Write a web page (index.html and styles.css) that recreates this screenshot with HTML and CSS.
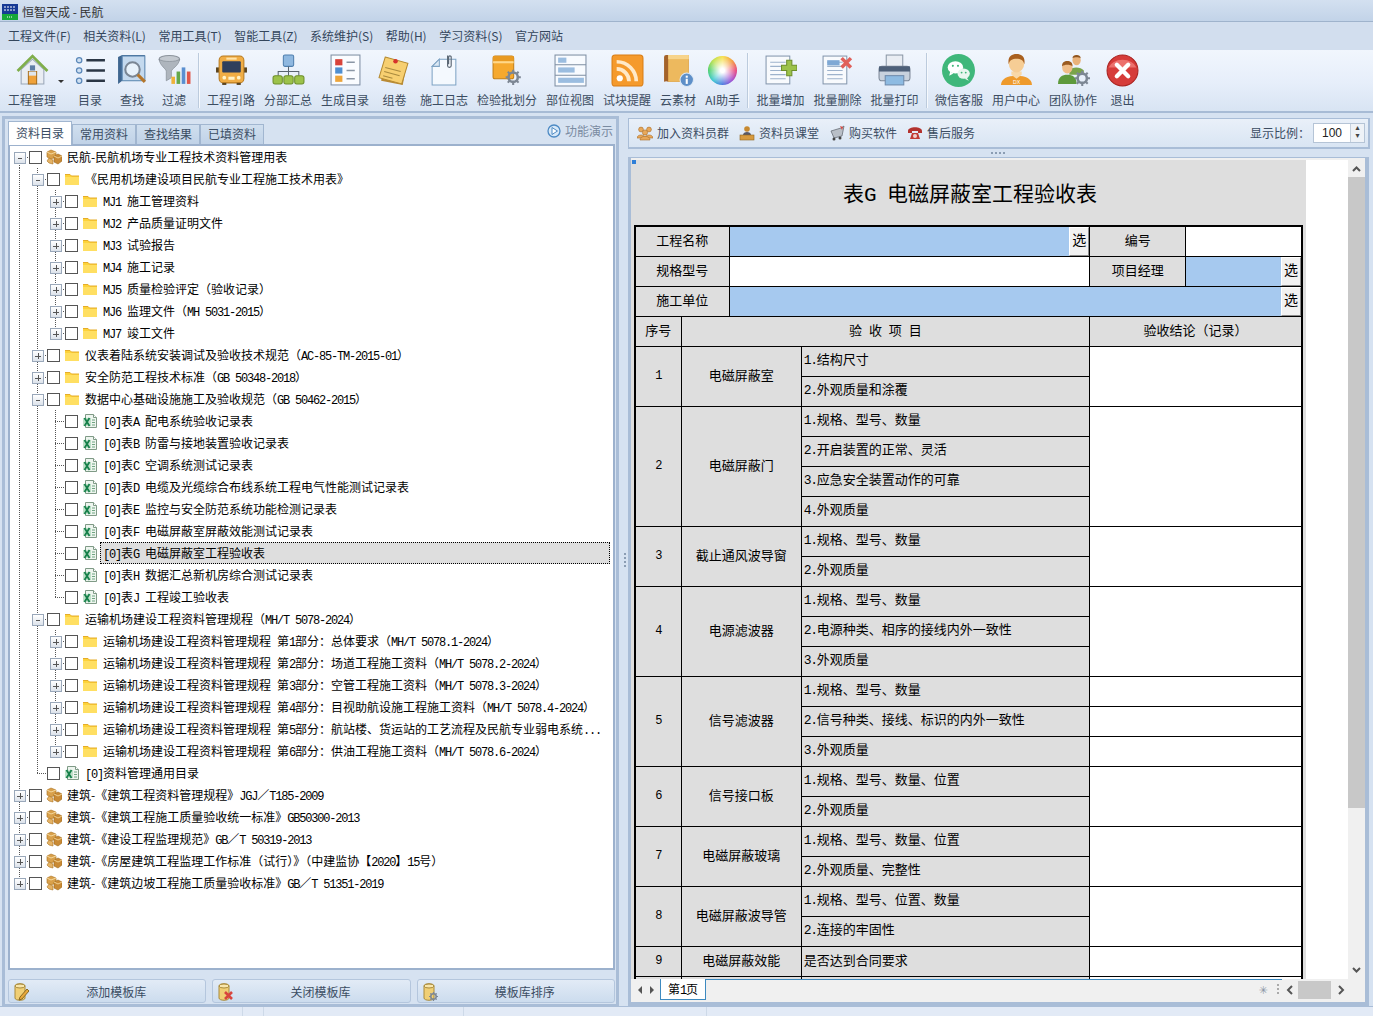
FILE: index.html
```html
<!DOCTYPE html>
<html lang="zh">
<head>
<meta charset="utf-8">
<title>恒智天成 - 民航</title>
<link rel="stylesheet" href="styles.css">
</head>
<body>
<svg class="defs" aria-hidden="true">
  <symbol id="pkg" viewBox="0 0 16 16"><path d="M5 1l5 2v5L5 10 1 8V3z" fill="#d9a04a" stroke="#a9701f" stroke-width=".6"/><path d="M1 3l4 2 5-2" fill="none" stroke="#f3d9a0"/><path d="M8 7l4-2 4 2v5l-4 3-4-2z" fill="#c98a35" stroke="#9c6a1e" stroke-width=".6"/><path d="M3 9l4 2v4l-4-1-2-2z" fill="#e5b365" stroke="#a9701f" stroke-width=".6"/><path d="M8 7l4 2 4-2" fill="none" stroke="#f0cf8e"/></symbol>
  <symbol id="fld" viewBox="0 0 16 16"><path d="M1 3.500h5l1.500 1.500H15V14H1z" fill="#fdd33a"/><path d="M1 6h14v8H1z" fill="#ffdf62"/><path d="M1 3.500h5l1.500 1.500H15" fill="none" stroke="#e5ac2a"/></symbol>
  <symbol id="xls" viewBox="0 0 16 16"><path d="M3.500 1.500h8l3 3v10h-11z" fill="#eef5ef" stroke="#7f9a86"/><path d="M11.500 1.500v3h3" fill="#fff" stroke="#7f9a86"/><path d="M1 5h8v8H1z" fill="#bfe0c9"/><path d="M2.500 5l5 8M7.500 5l-5 8" stroke="#16804a" stroke-width="1.800"/><path d="M10 7h3M10 9.500h3M10 12h3" stroke="#6fa582"/></symbol>
  <symbol id="home" viewBox="0 0 32 32"><path d="M5 15v14h22V15L16 5z" fill="#e9edf3" stroke="#9aa7b8"/><path d="M1.500 16.500L16 2l14.500 14.500" fill="none" stroke="#7fae4a" stroke-width="2.600"/><path d="M12 17h8v12h-8z" fill="#f0a23a" stroke="#a86d18"/><path d="M12.500 17h7v4h-7z" fill="#dfe6ee"/><rect x="13.500" y="11" width="5" height="5" fill="#5e7da6"/></symbol>
  <symbol id="list" viewBox="0 0 32 32"><g fill="#cfe0f2" stroke="#5a87b8" stroke-width="1.200"><circle cx="5" cy="6" r="2.600"/><circle cx="5" cy="16" r="2.600"/><circle cx="5" cy="26" r="2.600"/></g><path d="M12 6h18M12 16h18M12 26h18" stroke="#2b3645" stroke-width="2.400"/></symbol>
  <symbol id="find" viewBox="0 0 32 32"><path d="M2 3l4-2h22v25H6l-4 3z" fill="#3f6690"/><path d="M6 2h22v24H6z" fill="#c4d9ee" stroke="#5f8ab3"/><circle cx="16" cy="15" r="7" fill="#e8f2fb" stroke="#7a8694" stroke-width="2"/><path d="M21 20l7 7" stroke="#b5762a" stroke-width="3"/></symbol>
  <symbol id="filter" viewBox="0 0 32 32"><ellipse cx="11" cy="5" rx="10" ry="3.500" fill="#c3c9d0" stroke="#8b939c"/><path d="M1 5c1 7 7 9 7 12v9l5-3v-6c0-3 7-5 8-12-3 3-17 3-20 0z" fill="#aeb5bd" stroke="#7e868f" stroke-width=".6"/><rect x="13" y="22" width="3.500" height="7" fill="#efb23a"/><rect x="18" y="17" width="3.500" height="12" fill="#64a84a"/><rect x="23" y="13" width="3.500" height="16" fill="#5a8fd0"/><rect x="28" y="17" width="3.500" height="12" fill="#e0574a"/></symbol>
  <symbol id="bus" viewBox="0 0 32 32"><rect x="1" y="13" width="3" height="5" fill="#5a4420"/><rect x="28" y="13" width="3" height="5" fill="#5a4420"/><rect x="4" y="2" width="24" height="26" rx="4" fill="#f0ad45" stroke="#b87a1e"/><rect x="7" y="7" width="18" height="11" rx="1" fill="#2f3f5c"/><rect x="11" y="3.500" width="10" height="2" fill="#ffe3a8"/><circle cx="9" cy="23" r="1.800" fill="#fff3c8"/><circle cx="23" cy="23" r="1.800" fill="#fff3c8"/><rect x="13" y="22" width="6" height="3" fill="#fff3c8"/><rect x="7" y="28" width="4" height="2" fill="#5a4420"/><rect x="21" y="28" width="4" height="2" fill="#5a4420"/></symbol>
  <symbol id="org" viewBox="0 0 32 32"><rect x="11" y="1" width="10" height="11" rx="1.500" fill="#8fb8e0" stroke="#4f7fae"/><path d="M16 12v5M6 21v-4h20v4M16 17v4" stroke="#5a6470" fill="none"/><g fill="#9cc24a" stroke="#6d8f2a"><rect x="1" y="21" width="9" height="8" rx="2"/><rect x="11.500" y="21" width="9" height="8" rx="2"/><rect x="22" y="21" width="9" height="8" rx="2"/></g></symbol>
  <symbol id="cat" viewBox="0 0 32 32"><rect x="2" y="1" width="28" height="29" fill="#fafcff" stroke="#7d8ea3"/><rect x="6" y="5" width="7" height="6" fill="#d8433a"/><rect x="6" y="13" width="7" height="6" fill="#4f8fd0"/><rect x="6" y="21" width="7" height="6" fill="#eda53a"/><path d="M17 8h8M17 16h8M17 24h8" stroke="#8a96a5" stroke-width="1.400"/></symbol>
  <symbol id="vol" viewBox="0 0 32 32"><path d="M7 5l21 4-4 21L3 26z" fill="#b98a36"/><path d="M7 3l22 6-6 20L1 23z" fill="#f7cf70" stroke="#b58a30"/><path d="M7 13l15 4M6 17l15 4M5 21l9 2.500" stroke="#a98a3e"/><circle cx="17" cy="7" r="2.200" fill="#d7322c"/></symbol>
  <symbol id="log" viewBox="0 0 32 32"><path d="M4 30V12L11 5h16v25z" fill="#f4f9fe" stroke="#7fa3c4"/><path d="M4 12l7-7v7z" fill="#dbe8f4" stroke="#7fa3c4"/><path d="M19 1.500v10c0 2 3.500 2 3.500 0V3c0-1.500-2.500-1.500-2.500 0v7" fill="none" stroke="#5a6673" stroke-width="1.100"/></symbol>
  <symbol id="gear" viewBox="0 0 12 12"><circle cx="6" cy="6" r="3.600" fill="none" stroke="#7d8794" stroke-width="2"/><path d="M6 0v2.500M6 9.500V12M0 6h2.500M9.500 6H12M1.800 1.800l1.700 1.700M8.500 8.500l1.700 1.700M10.200 1.800L8.500 3.500M3.500 8.500l-1.700 1.700" stroke="#7d8794" stroke-width="1.600"/></symbol>
  <symbol id="batch" viewBox="0 0 32 32"><rect x="2" y="2" width="20" height="22" rx="2" fill="#f6a92e" stroke="#c47f14"/><rect x="2" y="2" width="20" height="5" fill="#e89a22"/><rect x="2" y="7" width="20" height="2" fill="#ffd88a"/><use href="#gear" x="14" y="15" width="15" height="15"/></symbol>
  <symbol id="part" viewBox="0 0 32 32"><rect x="1" y="1" width="30" height="30" fill="#f8fbff" stroke="#7d8ea3"/><path d="M1 10.500h30M1 20.500h30" stroke="#7d8ea3"/><rect x="4" y="3.500" width="8" height="5" fill="#9bbde0"/><rect x="4" y="13" width="16" height="5" fill="#9bbde0"/><rect x="4" y="23" width="25" height="5" fill="#9bbde0"/></symbol>
  <symbol id="rss" viewBox="0 0 32 32"><rect x="1" y="1" width="30" height="30" rx="3" fill="#f59a2c" stroke="#d97c12"/><circle cx="8.500" cy="23.500" r="3" fill="#fff"/><path d="M5.500 14.500a12 12 0 0 1 12 12M5.500 7.500a19 19 0 0 1 19 19" fill="none" stroke="#ffe9c8" stroke-width="3.600"/></symbol>
  <symbol id="book" viewBox="0 0 32 32"><path d="M2 3a2 2 0 0 1 2-2h22v26H6a4 4 0 0 0-4 0z" fill="#a3622a"/><rect x="6" y="1" width="20" height="26" fill="#edb95e"/><path d="M6 1h20v4H6z" fill="#f7d48c"/><circle cx="24" cy="25" r="6.500" fill="#5e8fc8" stroke="#dce9f6"/><rect x="23" y="24" width="2" height="5" fill="#fff"/><rect x="23" y="21" width="2" height="2" fill="#fff"/></symbol>
  <symbol id="doc" viewBox="0 0 32 32"><rect x="2" y="2" width="23" height="27" fill="#f8fafd" stroke="#8496ad"/><path d="M6 8h15M6 12h15M6 16h15M6 20h15M6 24h15" stroke="#9db2cc"/></symbol>
  <symbol id="print" viewBox="0 0 32 32"><rect x="8" y="1" width="16" height="13" fill="#e9edf3" stroke="#8b97a6"/><rect x="1" y="12" width="30" height="14" rx="3" fill="#c8d2de" stroke="#7b8796"/><rect x="1" y="12" width="30" height="5" fill="#4d5f78"/><rect x="7" y="21" width="18" height="9" fill="#8ebbe2" stroke="#6f8bab"/></symbol>
  <symbol id="wx" viewBox="0 0 32 32"><circle cx="16" cy="16" r="16" fill="#3fb77a"/><ellipse cx="13" cy="13" rx="7.500" ry="6" fill="#fff"/><path d="M8 17l-1 4 4-2z" fill="#fff"/><ellipse cx="21" cy="19" rx="6" ry="5" fill="#e8f6ef"/><path d="M24 23l2 3-4-2z" fill="#e8f6ef"/><circle cx="10.500" cy="11.500" r="1" fill="#3fb77a"/><circle cx="15.500" cy="11.500" r="1" fill="#3fb77a"/><circle cx="19" cy="18" r=".9" fill="#3fb77a"/><circle cx="23" cy="18" r=".9" fill="#3fb77a"/></symbol>
  <symbol id="user" viewBox="0 0 32 32"><path d="M1 30c0-6 6-9 15-9s15 3 15 9z" fill="#ee9a2c"/><path d="M11 20l5 4 5-4v-3H11z" fill="#f8d8a8"/><ellipse cx="16" cy="9" rx="7.500" ry="9" fill="#f6cd95"/><path d="M8.500 10C7 3 11 0 16 0s9 3 7.500 10C23 6 20 4.500 16 4.500S9 6 8.500 10z" fill="#a9601f"/></symbol>
  <symbol id="team" viewBox="0 0 32 32"><ellipse cx="19" cy="6" rx="4" ry="5" fill="#eab27a"/><path d="M15 4c0-4 8-4 8 0-2-1-6-1-8 0z" fill="#8f5520"/><path d="M12 16c2-4 11-4 14 0v4H12z" fill="#7aa44a"/><ellipse cx="10" cy="13" rx="5" ry="6" fill="#f0bd88"/><path d="M5 12c-1-7 11-7 10 0-2-2-8-2-10 0z" fill="#9a5a20"/><path d="M1 29c0-7 4-9 9-9s9 2 9 9z" fill="#5e9a3c"/><use href="#gear" x="17" y="16" width="15" height="15"/></symbol>
  <symbol id="quit" viewBox="0 0 32 32"><circle cx="16" cy="16" r="15" fill="#d63c3a" stroke="#a92522"/><path d="M2.500 13a14 10 0 0 1 27 0z" fill="#ec716d"/><path d="M10.500 10.500l11 11M21.500 10.500l-11 11" stroke="#fff" stroke-width="4.200" stroke-linecap="round"/></symbol>
</svg>

<header class="titlebar">
  <svg class="applogo" viewBox="0 0 16 16"><rect width="16" height="10" fill="#173a95"/><rect y="10" width="16" height="6" fill="#17a83a"/><path d="M2 3h12M2 6h12" stroke="#fff" stroke-dasharray="2 1"/><path d="M5 13h6" stroke="#fff" stroke-dasharray="1 1"/></svg>
  <span>恒智天成 - 民航</span>
</header>

<nav class="menubar">
  <span>工程文件(F)</span><span>相关资料(L)</span><span>常用工具(T)</span><span>智能工具(Z)</span><span>系统维护(S)</span><span>帮助(H)</span><span>学习资料(S)</span><span>官方网站</span>
</nav>

<div class="toolbar">
  <div class="tb first"><svg><use href="#home"/></svg><span>工程管理</span><i class="drop"></i></div>
  <div class="tb"><svg><use href="#list"/></svg><span>目录</span></div>
  <div class="tb"><svg><use href="#find"/></svg><span>查找</span></div>
  <div class="tb"><svg><use href="#filter"/></svg><span>过滤</span></div>
  <div class="sep"></div>
  <div class="tb"><svg><use href="#bus"/></svg><span>工程引路</span></div>
  <div class="tb"><svg><use href="#org"/></svg><span>分部汇总</span></div>
  <div class="tb"><svg><use href="#cat"/></svg><span>生成目录</span></div>
  <div class="tb"><svg><use href="#vol"/></svg><span>组卷</span></div>
  <div class="tb"><svg><use href="#log"/></svg><span>施工日志</span></div>
  <div class="tb"><svg><use href="#batch"/></svg><span>检验批划分</span></div>
  <div class="tb"><svg><use href="#part"/></svg><span>部位视图</span></div>
  <div class="tb"><svg><use href="#rss"/></svg><span>试块提醒</span></div>
  <div class="tb"><svg><use href="#book"/></svg><span>云素材</span></div>
  <div class="tb"><svg class="wheel"></svg><span>AI助手</span></div>
  <div class="sep"></div>
  <div class="tb"><svg viewBox="0 0 32 32"><use href="#doc"/><path d="M22 6h5v5h5v5h-5v5h-5v-5h-5v-5h5z" fill="#9cc24a" stroke="#6d8f2a"/></svg><span>批量增加</span></div>
  <div class="tb"><svg viewBox="0 0 32 32"><use href="#doc"/><rect x="6" y="6" width="12" height="5" fill="#7fa8d4"/><path d="M20 4l9 9M29 4l-9 9" stroke="#e0605a" stroke-width="3.400"/></svg><span>批量删除</span></div>
  <div class="tb"><svg><use href="#print"/></svg><span>批量打印</span></div>
  <div class="sep"></div>
  <div class="tb"><svg><use href="#wx"/></svg><span>微信客服</span></div>
  <div class="tb"><svg viewBox="0 0 32 32"><use href="#user"/><text class="dx" x="16" y="29.500">DX</text></svg><span>用户中心</span></div>
  <div class="tb"><svg><use href="#team"/></svg><span>团队协作</span></div>
  <div class="tb"><svg><use href="#quit"/></svg><span>退出</span></div>
</div>

<main class="main">
  <section class="left">
    <div class="tabs">
      <span class="tab on">资料目录</span><span class="tab">常用资料</span><span class="tab">查找结果</span><span class="tab">已填资料</span>
      <span class="demo"><svg viewBox="0 0 14 14"><circle cx="7" cy="7" r="6" fill="#d7e8f8" stroke="#4d8ac4" stroke-width="1.300"/><path d="M5 3.500v7L10.500 7z" fill="#fff" stroke="#4d8ac4"/></svg>功能演示</span>
    </div>
    <div class="tree">
      <div class="r"><i class="xf mi"></i><b></b><svg><use href="#pkg"/></svg><span>民航-民航机场专业工程技术资料管理用表</span></div>
      <div class="r"><i class="v"></i><i class="x mi"></i><b></b><svg><use href="#fld"/></svg><span>《民用机场建设项目民航专业工程施工技术用表》</span></div>
      <div class="r"><i class="v"></i><i class="v"></i><i class="x pl"></i><b></b><svg><use href="#fld"/></svg><span><u>MJ1 </u>施工管理资料</span></div>
      <div class="r"><i class="v"></i><i class="v"></i><i class="x pl"></i><b></b><svg><use href="#fld"/></svg><span><u>MJ2 </u>产品质量证明文件</span></div>
      <div class="r"><i class="v"></i><i class="v"></i><i class="x pl"></i><b></b><svg><use href="#fld"/></svg><span><u>MJ3 </u>试验报告</span></div>
      <div class="r"><i class="v"></i><i class="v"></i><i class="x pl"></i><b></b><svg><use href="#fld"/></svg><span><u>MJ4 </u>施工记录</span></div>
      <div class="r"><i class="v"></i><i class="v"></i><i class="x pl"></i><b></b><svg><use href="#fld"/></svg><span><u>MJ5 </u>质量检验评定（验收记录）</span></div>
      <div class="r"><i class="v"></i><i class="v"></i><i class="x pl"></i><b></b><svg><use href="#fld"/></svg><span><u>MJ6 </u>监理文件（<u>MH 5031-2015</u>）</span></div>
      <div class="r"><i class="v"></i><i class="v"></i><i class="xl pl"></i><b></b><svg><use href="#fld"/></svg><span><u>MJ7 </u>竣工文件</span></div>
      <div class="r"><i class="v"></i><i class="x pl"></i><b></b><svg><use href="#fld"/></svg><span>仪表着陆系统安装调试及验收技术规范（<u>AC-85-TM-2015-01</u>）</span></div>
      <div class="r"><i class="v"></i><i class="x pl"></i><b></b><svg><use href="#fld"/></svg><span>安全防范工程技术标准（<u>GB 50348-2018</u>）</span></div>
      <div class="r"><i class="v"></i><i class="x mi"></i><b></b><svg><use href="#fld"/></svg><span>数据中心基础设施施工及验收规范（<u>GB 50462-2015</u>）</span></div>
      <div class="r"><i class="v"></i><i class="v"></i><i class="x"></i><b></b><svg><use href="#xls"/></svg><span><u>[0]</u>表<u>A </u>配电系统验收记录表</span></div>
      <div class="r"><i class="v"></i><i class="v"></i><i class="x"></i><b></b><svg><use href="#xls"/></svg><span><u>[0]</u>表<u>B </u>防雷与接地装置验收记录表</span></div>
      <div class="r"><i class="v"></i><i class="v"></i><i class="x"></i><b></b><svg><use href="#xls"/></svg><span><u>[0]</u>表<u>C </u>空调系统测试记录表</span></div>
      <div class="r"><i class="v"></i><i class="v"></i><i class="x"></i><b></b><svg><use href="#xls"/></svg><span><u>[0]</u>表<u>D </u>电缆及光缆综合布线系统工程电气性能测试记录表</span></div>
      <div class="r"><i class="v"></i><i class="v"></i><i class="x"></i><b></b><svg><use href="#xls"/></svg><span><u>[0]</u>表<u>E </u>监控与安全防范系统功能检测记录表</span></div>
      <div class="r"><i class="v"></i><i class="v"></i><i class="x"></i><b></b><svg><use href="#xls"/></svg><span><u>[0]</u>表<u>F </u>电磁屏蔽室屏蔽效能测试记录表</span></div>
      <div class="r sel"><i class="v"></i><i class="v"></i><i class="x"></i><b></b><svg><use href="#xls"/></svg><span><u>[0]</u>表<u>G </u>电磁屏蔽室工程验收表</span></div>
      <div class="r"><i class="v"></i><i class="v"></i><i class="x"></i><b></b><svg><use href="#xls"/></svg><span><u>[0]</u>表<u>H </u>数据汇总新机房综合测试记录表</span></div>
      <div class="r"><i class="v"></i><i class="v"></i><i class="xl"></i><b></b><svg><use href="#xls"/></svg><span><u>[0]</u>表<u>J </u>工程竣工验收表</span></div>
      <div class="r"><i class="v"></i><i class="x mi"></i><b></b><svg><use href="#fld"/></svg><span>运输机场建设工程资料管理规程（<u>MH/T 5078-2024</u>）</span></div>
      <div class="r"><i class="v"></i><i class="v"></i><i class="x pl"></i><b></b><svg><use href="#fld"/></svg><span>运输机场建设工程资料管理规程<u> </u>第<u>1</u>部分：总体要求（<u>MH/T 5078.1-2024</u>）</span></div>
      <div class="r"><i class="v"></i><i class="v"></i><i class="x pl"></i><b></b><svg><use href="#fld"/></svg><span>运输机场建设工程资料管理规程<u> </u>第<u>2</u>部分：场道工程施工资料（<u>MH/T 5078.2-2024</u>）</span></div>
      <div class="r"><i class="v"></i><i class="v"></i><i class="x pl"></i><b></b><svg><use href="#fld"/></svg><span>运输机场建设工程资料管理规程<u> </u>第<u>3</u>部分：空管工程施工资料（<u>MH/T 5078.3-2024</u>）</span></div>
      <div class="r"><i class="v"></i><i class="v"></i><i class="x pl"></i><b></b><svg><use href="#fld"/></svg><span>运输机场建设工程资料管理规程<u> </u>第<u>4</u>部分：目视助航设施工程施工资料（<u>MH/T 5078.4-2024</u>）</span></div>
      <div class="r"><i class="v"></i><i class="v"></i><i class="x pl"></i><b></b><svg><use href="#fld"/></svg><span>运输机场建设工程资料管理规程<u> </u>第<u>5</u>部分：航站楼、货运站的工艺流程及民航专业弱电系统<u>...</u></span></div>
      <div class="r"><i class="v"></i><i class="v"></i><i class="xl pl"></i><b></b><svg><use href="#fld"/></svg><span>运输机场建设工程资料管理规程<u> </u>第<u>6</u>部分：供油工程施工资料（<u>MH/T 5078.6-2024</u>）</span></div>
      <div class="r"><i class="v"></i><i class="xl"></i><b></b><svg><use href="#xls"/></svg><span><u>[0]</u>资料管理通用目录</span></div>
      <div class="r"><i class="x pl"></i><b></b><svg><use href="#pkg"/></svg><span>建筑-《建筑工程资料管理规程》<u>JGJ</u>／<u>T185-2009</u></span></div>
      <div class="r"><i class="x pl"></i><b></b><svg><use href="#pkg"/></svg><span>建筑-《建筑工程施工质量验收统一标准》<u>GB50300-2013</u></span></div>
      <div class="r"><i class="x pl"></i><b></b><svg><use href="#pkg"/></svg><span>建筑-《建设工程监理规范》<u>GB</u>／<u>T 50319-2013</u></span></div>
      <div class="r"><i class="x pl"></i><b></b><svg><use href="#pkg"/></svg><span>建筑-《房屋建筑工程监理工作标准（试行）》（中建监协【<u>2020</u>】<u>15</u>号）</span></div>
      <div class="r"><i class="xl pl"></i><b></b><svg><use href="#pkg"/></svg><span>建筑-《建筑边坡工程施工质量验收标准》<u>GB</u>／<u>T 51351-2019</u></span></div>
    </div>
    <div class="tplbar">
      <button class="tpl"><svg viewBox="0 0 16 18"><path d="M2 3c0-3 10-3 10 0v12c0 3-10 3-10 0z" fill="#f0cf75" stroke="#a98a3a"/><ellipse cx="7" cy="3" rx="5" ry="2" fill="#f8e6ac" stroke="#a98a3a"/><path d="M14 6l2 2-7 8-3 1 1-3z" fill="#e8a83a" stroke="#8a6a22"/></svg><span>添加模板库</span></button>
      <button class="tpl"><svg viewBox="0 0 16 18"><path d="M2 3c0-3 10-3 10 0v12c0 3-10 3-10 0z" fill="#f0cf75" stroke="#a98a3a"/><ellipse cx="7" cy="3" rx="5" ry="2" fill="#f8e6ac" stroke="#a98a3a"/><path d="M8 9l7 7M15 9l-7 7" stroke="#d8453e" stroke-width="2.600"/></svg><span>关闭模板库</span></button>
      <button class="tpl"><svg viewBox="0 0 16 18"><path d="M2 3c0-3 10-3 10 0v12c0 3-10 3-10 0z" fill="#f0cf75" stroke="#a98a3a"/><ellipse cx="7" cy="3" rx="5" ry="2" fill="#f8e6ac" stroke="#a98a3a"/><use href="#gear" x="7" y="9" width="9" height="9"/></svg><span>模板库排序</span></button>
    </div>
  </section>

  <div class="vsplit"><i></i></div>

  <section class="right">
    <div class="rbar">
      <span class="ra"><svg viewBox="0 0 16 16"><g fill="#e8a85a" stroke="#a86d28" stroke-width=".6"><circle cx="4" cy="4.500" r="2.400"/><circle cx="12" cy="4.500" r="2.400"/><path d="M0 13c0-4 8-4 8 0zM8 13c0-4 8-4 8 0z"/><circle cx="8" cy="7.500" r="2.600"/><path d="M3 15c0-5 10-5 10 0z"/></g></svg>加入资料员群</span>
      <span class="ra"><svg viewBox="0 0 16 16"><circle cx="8" cy="4" r="2.800" fill="#c7892f"/><path d="M4 10c0-4 8-4 8 0z" fill="#5a5a66"/><rect x="1" y="10" width="14" height="5" fill="#d79a3e" stroke="#8f6420" stroke-width=".6"/></svg>资料员课堂</span>
      <span class="ra"><svg viewBox="0 0 16 16"><path d="M2 6l10-3 3-2-2 10-8 2z" fill="#b9bfc7" stroke="#5a6068" stroke-width=".7"/><circle cx="5" cy="14" r="1.500" fill="#444"/><circle cx="11" cy="13" r="1.500" fill="#444"/><path d="M11 1l3 1-1 3z" fill="#d8453e"/></svg>购买软件</span>
      <span class="ra"><svg viewBox="0 0 16 16"><path d="M1 6c0-5 14-5 14 0v2h-4V6H5v2H1z" fill="#b3322e"/><path d="M3 14l2-6h6l2 6z" fill="#c23c36"/><circle cx="8" cy="11" r="2" fill="#f0d0cc"/></svg>售后服务</span>
      <span class="ratio">显示比例：</span>
      <span class="spin"><em>100</em><s>▴<br>▾</s></span>
    </div>
    <div class="hsplit"><i></i></div>
    <div class="sheetframe">
      <div class="sheetrow">
        <div class="sheet">
          <i class="handle"></i>
          <h1>表<u>G </u>电磁屏蔽室工程验收表</h1>
          <table class="form">
            <colgroup><col class="c1"><col class="c2"><col class="c3"><col class="c4"><col class="c5"><col class="c6"></colgroup>
            <tr><td colspan="2" class="hd">工程名称</td><td colspan="2" class="fill"><span class="pick">选</span></td><td class="hd">编号</td><td class="w"></td></tr>
            <tr><td colspan="2" class="hd">规格型号</td><td colspan="2" class="w"></td><td class="hd">项目经理</td><td class="fill"><span class="pick">选</span></td></tr>
            <tr><td colspan="2" class="hd">施工单位</td><td colspan="4" class="fill"><span class="pick">选</span></td></tr>
            <tr><td class="hd">序号</td><td colspan="3" class="hd sp">验 收 项 目</td><td colspan="2" class="hd">验收结论（记录）</td></tr>

            <tr><td rowspan="2" class="hd"><u>1</u></td><td rowspan="2" colspan="2" class="hd">电磁屏蔽室</td><td class="it"><u>1.</u>结构尺寸</td><td rowspan="2" colspan="2" class="w"></td></tr>
            <tr><td class="it"><u>2.</u>外观质量和涂覆</td></tr>

            <tr><td rowspan="4" class="hd"><u>2</u></td><td rowspan="4" colspan="2" class="hd">电磁屏蔽门</td><td class="it"><u>1.</u>规格、型号、数量</td><td rowspan="4" colspan="2" class="w"></td></tr>
            <tr><td class="it"><u>2.</u>开启装置的正常、灵活</td></tr>
            <tr><td class="it"><u>3.</u>应急安全装置动作的可靠</td></tr>
            <tr><td class="it"><u>4.</u>外观质量</td></tr>

            <tr><td rowspan="2" class="hd"><u>3</u></td><td rowspan="2" colspan="2" class="hd">截止通风波导窗</td><td class="it"><u>1.</u>规格、型号、数量</td><td rowspan="2" colspan="2" class="w"></td></tr>
            <tr><td class="it"><u>2.</u>外观质量</td></tr>

            <tr><td rowspan="3" class="hd"><u>4</u></td><td rowspan="3" colspan="2" class="hd">电源滤波器</td><td class="it"><u>1.</u>规格、型号、数量</td><td rowspan="3" colspan="2" class="w"></td></tr>
            <tr><td class="it"><u>2.</u>电源种类、相序的接线内外一致性</td></tr>
            <tr><td class="it"><u>3.</u>外观质量</td></tr>

            <tr><td rowspan="3" class="hd"><u>5</u></td><td rowspan="3" colspan="2" class="hd">信号滤波器</td><td class="it"><u>1.</u>规格、型号、数量</td><td colspan="2" class="w"></td></tr>
            <tr><td class="it"><u>2.</u>信号种类、接线、标识的内外一致性</td><td colspan="2" class="w"></td></tr>
            <tr><td class="it"><u>3.</u>外观质量</td><td colspan="2" class="w"></td></tr>

            <tr><td rowspan="2" class="hd"><u>6</u></td><td rowspan="2" colspan="2" class="hd">信号接口板</td><td class="it"><u>1.</u>规格、型号、数量、位置</td><td rowspan="2" colspan="2" class="w"></td></tr>
            <tr><td class="it"><u>2.</u>外观质量</td></tr>

            <tr><td rowspan="2" class="hd"><u>7</u></td><td rowspan="2" colspan="2" class="hd">电磁屏蔽玻璃</td><td class="it"><u>1.</u>规格、型号、数量、位置</td><td rowspan="2" colspan="2" class="w"></td></tr>
            <tr><td class="it"><u>2.</u>外观质量、完整性</td></tr>

            <tr><td rowspan="2" class="hd"><u>8</u></td><td rowspan="2" colspan="2" class="hd">电磁屏蔽波导管</td><td class="it"><u>1.</u>规格、型号、位置、数量</td><td rowspan="2" colspan="2" class="w"></td></tr>
            <tr><td class="it"><u>2.</u>连接的牢固性</td></tr>

            <tr><td class="hd"><u>9</u></td><td colspan="2" class="hd">电磁屏蔽效能</td><td class="it">是否达到合同要求</td><td colspan="2" class="w"></td></tr>
            <tr><td class="hd"></td><td colspan="2" class="hd"></td><td class="it"></td><td colspan="2" class="w"></td></tr>
          </table>
        </div>
        <div class="blank"></div>
        <div class="vscroll">
          <svg class="arrow" viewBox="0 0 17 15"><path d="M5 9l3.500-3.500L12 9" fill="none" stroke="#555" stroke-width="2"/></svg>
          <i class="thumb"></i>
          <svg class="arrow" viewBox="0 0 17 15"><path d="M5 6l3.500 3.500L12 6" fill="none" stroke="#555" stroke-width="2"/></svg>
        </div>
      </div>
      <div class="pagebar">
        <span class="nav"><svg viewBox="0 0 24 20"><path d="M8 6v8l-4-4zM16 6v8l4-4z" fill="#555"/></svg></span>
        <span class="ptab">第<u>1</u>页</span>
        <span class="pline"><span class="star">✳</span><span class="vdots"></span></span>
        <svg class="harr" viewBox="0 0 16 18"><path d="M10 5L6 9l4 4" fill="none" stroke="#555" stroke-width="2"/></svg>
        <i class="hthumb"></i>
        <svg class="harr" viewBox="0 0 16 18"><path d="M6 5l4 4-4 4" fill="none" stroke="#555" stroke-width="2"/></svg>
      </div>
    </div>
  </section>
</main>
<footer class="status"><i></i><i></i><i></i><i></i></footer>
</body>
</html>
```

FILE: styles.css
```css
* { box-sizing: border-box; }
html, body { margin: 0; padding: 0; }
body {
  width: 1373px; height: 1016px; overflow: hidden;
  background: #d6e2f1;
  font: 12px/1 "Noto Sans CJK SC", "Liberation Sans", sans-serif;
  color: #000;
  display: flex; flex-direction: column;
}
u { text-decoration: none; font-family: "Liberation Mono", monospace; letter-spacing: -.1em; white-space: pre; }
.defs { position: absolute; width: 0; height: 0; }
.dx { font: 5px "Liberation Sans", sans-serif; text-anchor: middle; fill: #fff; }

.titlebar {
  height: 22px; display: flex; align-items: center; gap: 4px; padding: 2px 0 0 2px;
  background: linear-gradient(#d3e0f0, #c2d3e8);
  border-bottom: 1px solid #9fb3cc; color: #333;
}
.applogo { width: 16px; height: 16px; }

.menubar {
  height: 28px; display: flex; align-items: center; padding-left: 1.750px;
  background: #d2deee; color: #34465c;
}
.menubar span { padding: 0 6.250px; }

.toolbar {
  height: 63px; display: flex; padding-left: 3.500px;
  background: linear-gradient(#f1f6fd, #e6eefa 55%, #d8e4f3);
  border-bottom: 2px solid #a7bbd5; color: #3b4c61;
}
.tb {
  position: relative; min-width: 42px; padding: 0 4.500px; padding-top: 4px;
  display: flex; flex-direction: column; align-items: center;
}
.tb svg { width: 33px; height: 33px; display: block; }
.tb span { margin-top: 6px; white-space: nowrap; line-height: 14px; }
.tb.first { width: 65.500px; align-items: flex-start; }
.tb.first svg { margin-left: 8px; }
.drop { position: absolute; left: 54px; top: 30px; border: 3px solid transparent; border-top: 3px solid #333; border-bottom: 0; }
.sep { width: 7.500px; position: relative; }
.sep::before { content: ""; position: absolute; left: 3px; top: 3px; bottom: 3px; width: 1px; background: #bccbdd; box-shadow: 1px 0 #f6f9fd; }
.wheel {
  border-radius: 50%;
  background: radial-gradient(circle, #fff 0 10%, rgba(255,255,255,0) 70%), conic-gradient(#f7e04a, #f39a3a, #e8407a, #a04ad0, #4a7ae0, #3ac8d0, #4ad070, #b8e04a, #f7e04a);
  width: 29px !important; height: 29px !important; margin: 2px 0;
}

.main { height: 893px; display: flex; padding: 3px 3px 0 2px; }
.left {
  width: 617px; height: 890px; display: flex; flex-direction: column;
  border: 3px solid #a9bdd7; border-bottom-width: 2px; padding: 0 1px 0 3px;
  background: #d6e2f1;
}
.tabs { height: 25px; display: flex; align-items: flex-end; position: relative; color: #3b4d63; }
.tab { height: 20px; padding: 0 7px 1px; display: flex; align-items: center; background: linear-gradient(#d0dfef, #c0d2e7); border: 1px solid #a1b6d0; border-bottom: 0; }
.tab.on { height: 24px; background: #fff; margin-bottom: -1px; z-index: 1; border-color: #a1b6d0; }
.demo { margin-left: auto; margin-bottom: 6px; margin-right: 2px; display: flex; align-items: center; gap: 4px; color: #7a8ba1; }
.demo svg { width: 14px; height: 14px; }

.tree {
  height: 826px; background: #fff; border: 2px solid #9cb1cd; overflow: hidden;
}
.r { height: 22px; display: flex; align-items: center; }
.r i { width: 18px; height: 22px; flex: none; position: relative; }
.r .v { background: repeating-linear-gradient(#555 0 1px, transparent 1px 2px) 9px 0 / 1px 100% no-repeat; }
.r .x, .r .xl, .r .xf {
  background:
    repeating-linear-gradient(90deg, #555 0 1px, transparent 1px 2px) 9px 11px / 9px 1px no-repeat,
    repeating-linear-gradient(#555 0 1px, transparent 1px 2px) 9px 0 / 1px 100% no-repeat;
}
.r .xl { background-size: 9px 1px, 1px 12px; }
.r .xf { background-position: 9px 11px, 9px 11px; background-size: 9px 1px, 1px 11px; }
.r .pl::before, .r .mi::before {
  content: ""; position: absolute; left: 4px; top: 6px; width: 10px; height: 10px;
  border: 1px solid #9aa8ba;
  background: linear-gradient(#555, #555) center / 4px 1px no-repeat, linear-gradient(#fff, #dde3eb);
}
.r .pl::before {
  background: linear-gradient(#555, #555) center / 6px 1px no-repeat, linear-gradient(#555, #555) center / 1px 6px no-repeat, linear-gradient(#fff, #dde3eb);
}
.r b { width: 13px; height: 13px; flex: none; margin-left: 1px; border: 1px solid #555; background: #fff; }
.r svg { width: 16px; height: 16px; flex: none; margin-left: 4px; }
.r span { margin-left: 2px; padding: 0 0 0 3px; height: 22px; line-height: 21px; white-space: nowrap; }
.r.sel span { flex: 1; margin-right: 3px; margin-left: 2px; background: #dedede; outline: 1px dotted #000; outline-offset: -1px; }

.tplbar { flex: 1; display: flex; gap: 6px; padding: 9px 0 0 0; }
.tpl {
  width: 199px; height: 24px; padding: 1px 0 0 4px; display: flex; align-items: center;
  font: inherit; color: #3b4d63;
  background: linear-gradient(#e2ebf6, #ccdcee); border: 1px solid #b4c6dd; border-radius: 3px;
}
.tpl svg { width: 16px; height: 18px; flex: none; }
.tpl span { flex: 1; padding-right: 2px; text-align: center; }

.vsplit { width: 9px; height: 890px; display: flex; align-items: center; justify-content: center; }
.vsplit i { width: 2px; height: 15px; margin: -2px 0 0 2px; background: repeating-linear-gradient(#8b9db3 0 2px, transparent 2px 4px); }

.right { width: 742px; display: flex; flex-direction: column; padding-top: 2px; }
.rbar {
  height: 31px; display: flex; align-items: center; padding: 0 0 1px 8px; color: #3b4d63;
  background: linear-gradient(#e9f0f9, #d9e5f3); border: 1px solid #a9bdd7; border-width: 1px 2px 2px 1px;
}
.ra { display: flex; align-items: center; gap: 4px; margin-right: 10px; }
.ra svg { width: 16px; height: 16px; }
.ratio { margin-left: auto; margin-right: 3px; }
.spin { width: 52px; height: 20px; margin-right: 3px; background: #fff; border: 1px solid #b5c4d6; display: flex; align-items: center; }
.spin em { flex: 1; text-align: right; padding-right: 8px; font: 12px "Liberation Sans", sans-serif; color: #222; }
.spin s { width: 14px; height: 18px; text-decoration: none; background: #eef2f7; border-left: 1px solid #c5d0dd; font: 8px/8px "DejaVu Sans", sans-serif; text-align: center; color: #444; }
.hsplit { height: 8px; display: flex; align-items: center; justify-content: center; }
.hsplit i { width: 14px; height: 2px; margin-right: 2px; background: repeating-linear-gradient(90deg, #8b9db3 0 2px, transparent 2px 4px); }

.sheetframe { width: 741px; height: 849px; border: 1px solid #a9bdd7; border-width: 1px 4px 4px 3px; background: #f0f0f0; display: flex; flex-direction: column; }
.sheetrow { display: flex; height: 821px; padding-top: 2px; background: #f0f0f0; }
.sheet { width: 675px; height: 100%; background: #dedede; overflow: hidden; padding-left: 3px; position: relative; }
.handle { position: absolute; left: 1px; top: 0; width: 4px; height: 4px; background: #2f7fd8; }
.sheet h1 { margin: 0; height: 65px; padding-top: 18px; font-size: 21px; font-weight: 400; line-height: 28px; text-align: center; }
.sheet h1 u { letter-spacing: -.05em; }
.form { width: 669px; table-layout: fixed; border-collapse: collapse; border: 2px solid #000; font-size: 13px; }
.c1 { width: 46px; } .c2 { width: 48px; } .c3 { width: 72px; } .c4 { width: 288px; } .c5 { width: 96px; } .c6 { width: 116px; }
.form td { height: 30px; padding: 0; border: 1px solid #000; text-align: center; position: relative; }
.form td.hd { padding-bottom: 3px; }
.form td.hd u { font-size: 12px; }
.form td.w { background: #fff; }
.form td.fill { background: #a6c9ef; }
.form td.it { text-align: left; padding: 0 0 3px 2px; }
.form td.sp { word-spacing: 4px; }
.pick {
  position: absolute; right: 0; top: 0; bottom: 0; width: 20px; line-height: 22px; font-size: 14px;
  background: #f1f1f1; border: 1px solid; border-color: #fff #8a8a8a #8a8a8a #fff;
}
.blank { width: 42px; background: #fff; }
.vscroll { width: 17px; display: flex; flex-direction: column; }
.arrow { width: 17px; height: 15px; flex: none; margin-top: 2px; }
.thumb { display: block; height: 631px; background: #c8c8c8; flex: none; margin-bottom: auto; }
.vscroll .arrow:last-child { margin-bottom: 2px; }
.pagebar { height: 21px; display: flex; align-items: center; padding-left: 3px; background: #f0f0f0; position: relative; }
.nav { width: 26px; height: 20px; display: flex; }
.nav svg { width: 24px; height: 20px; }
.ptab { width: 46px; height: 21px; background: #fff; text-align: center; line-height: 20px; border: 1px solid #3d8ac0; border-top: 0; }
.pline { flex: 1; height: 21px; border-top: 1px solid #3d8ac0; display: flex; justify-content: flex-end; align-items: center; }
.star { width: 16px; color: #8a96a5; font: 11px/1 "DejaVu Sans", sans-serif; text-align: center; }
.vdots { width: 2px; height: 12px; margin: 0 3px 0 6px; background: repeating-linear-gradient(#aaa 0 2px, transparent 2px 4px); }
.harr { width: 16px; height: 18px; flex: none; }
.hthumb { width: 33px; height: 18px; background: #c8c8c8; flex: none; margin: 0 2px 0 0; }
.pagebar > .harr:last-child { margin-right: 16px; }

.status { flex: 1; display: flex; background: #e2eaf6; border-top: 1px solid #a9bdd7; }
.status i { display: block; width: 243px; border-right: 1px solid #cdd9e8; height: 100%; }
.status i:nth-child(2) { width: 21px; }
.status i:nth-child(3) { width: 200px; }
```
